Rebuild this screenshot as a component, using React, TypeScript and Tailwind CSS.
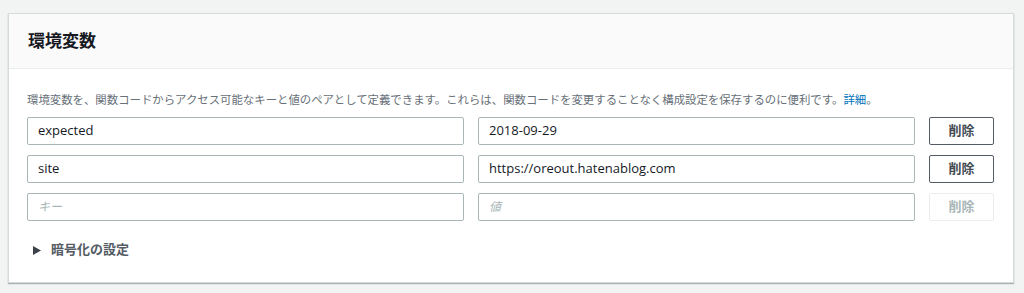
import React from "react";

const font = { fontFamily: '"Open Sans", "Noto Sans CJK JP", sans-serif' };

function Row({ k, v, disabled }: { k?: string; v?: string; disabled?: boolean }) {
  return (
    <div className="flex items-center h-[28px]">
      <div className="w-[437px] h-[28px] border border-[#aab7b8] rounded-[2px] bg-white flex items-center px-[10px]">
        {k ? (
          <span className="text-[13px] text-[#16191f]">{k}</span>
        ) : (
          <span className="text-[12px] italic text-[#aab7b8]">キー</span>
        )}
      </div>
      <div className="w-[437px] ml-[14px] h-[28px] border border-[#aab7b8] rounded-[2px] bg-white flex items-center px-[10px]">
        {v ? (
          <span className="text-[13px] text-[#16191f]">{v}</span>
        ) : (
          <span className="text-[12px] italic text-[#aab7b8]">値</span>
        )}
      </div>
      <div
        className={
          disabled
            ? "ml-[14px] w-[65px] h-[28px] border border-[#eaeded] rounded-[2px] bg-white flex items-center justify-center text-[13px] font-bold text-[#aab7b8]"
            : "ml-[14px] w-[65px] h-[28px] border border-[#545b64] rounded-[2px] bg-white flex items-center justify-center text-[13px] font-bold text-[#444c54]"
        }
      >
        削除
      </div>
    </div>
  );
}

export default function App() {
  return (
    <div style={font} className="w-[1024px] h-[293px] bg-[#f2f3f3] pt-[13px] pl-[8px] pr-[10px]">
      <div className="bg-white border border-[#d5dbdb] shadow-[0_1px_1px_rgba(0,28,36,0.3)]">
        <div className="h-[55px] bg-[#fafafa] border-b border-[#eaeded] flex items-center px-[19px]">
          <span className="text-[17px] font-bold text-[#16191f]">環境変数</span>
        </div>
        <div className="pl-[18px] pr-[18px] pt-[23px] pb-[25px]">
          <p className="text-[11.4px] leading-[16px] text-[#687078] whitespace-nowrap">
            環境変数を、関数コードからアクセス可能なキーと値のペアとして定義できます。これらは、関数コードを変更することなく構成設定を保存するのに便利です。<span className="text-[#0073bb]">詳細</span>。
          </p>
          <div className="mt-[9px] flex flex-col gap-[10px]">
            <Row k="expected" v="2018-09-29" />
            <Row k="site" v="https://oreout.hatenablog.com" />
            <Row disabled />
          </div>
          <div className="mt-[22px] flex items-center h-[14px] pl-[6px]">
            <svg width="8" height="9" viewBox="0 0 8 9" className="mr-[10px]">
              <polygon points="0,0 8,4.5 0,9" fill="#3b424a" />
            </svg>
            <span className="text-[13px] font-bold text-[#545b64]">暗号化の設定</span>
          </div>
        </div>
      </div>
    </div>
  );
}
